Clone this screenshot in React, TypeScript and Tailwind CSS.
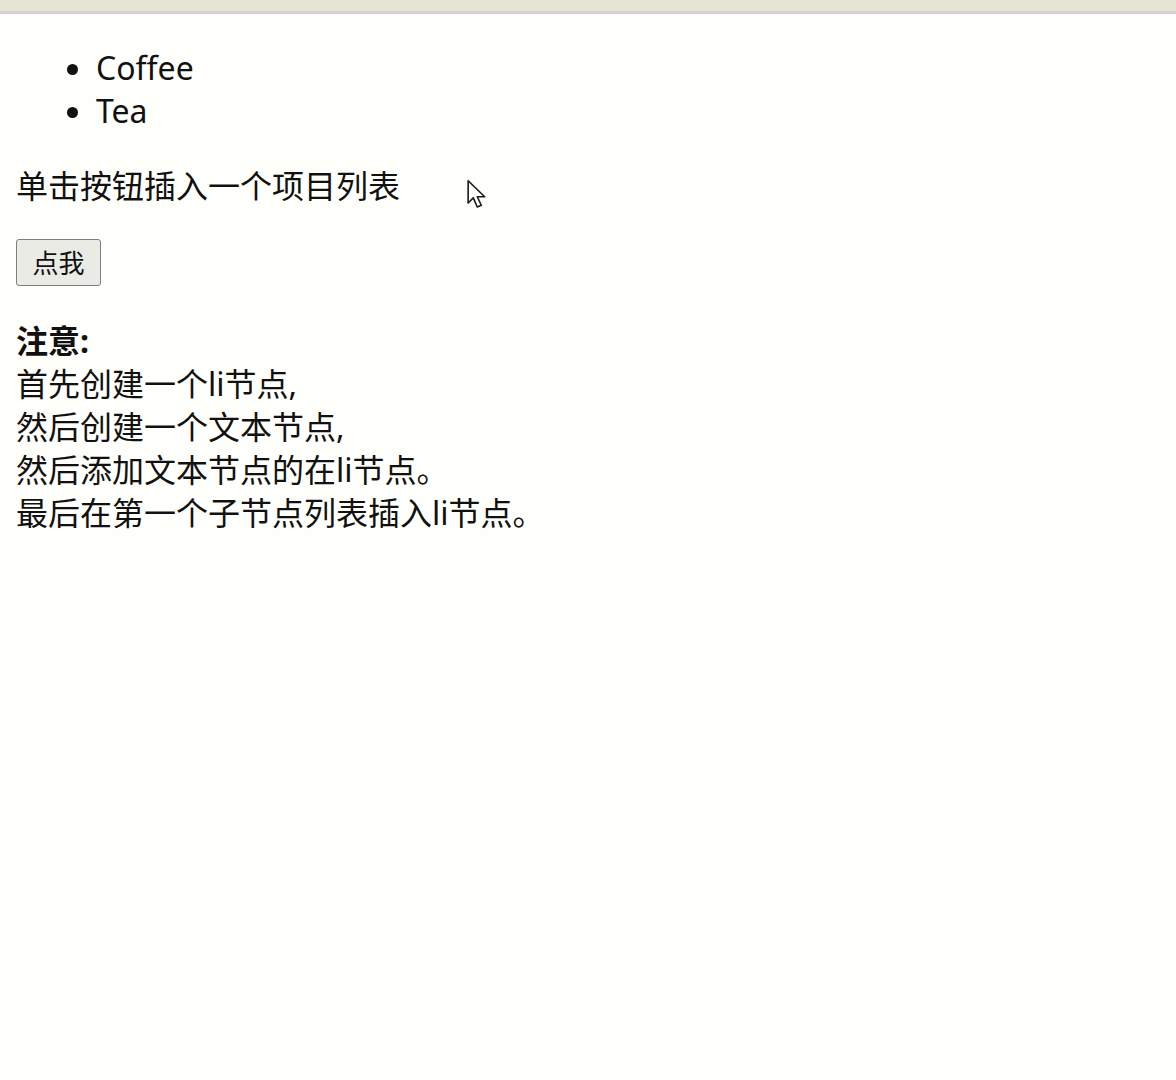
import React from 'react';

const font = { fontFamily: '"Noto Sans", "Noto Sans CJK SC", sans-serif' };

const Cursor: React.FC = () => (
  <svg
    className="absolute left-[466px] top-[179px]"
    width="26"
    height="32"
    viewBox="0 0 22 28"
    fill="none"
  >
    <path
      d="M1.5 1.5 L1.5 21 L6 16.5 L9.5 24.5 L13 23 L9.5 15.5 L16 15.5 Z"
      fill="#ffffff"
      stroke="#1a1a1a"
      strokeWidth="1.4"
      strokeLinejoin="round"
    />
  </svg>
);

const App: React.FC = () => {
  const notes = [
    '首先创建一个li节点,',
    '然后创建一个文本节点,',
    '然后添加文本节点的在li节点。',
    '最后在第一个子节点列表插入li节点。',
  ];

  return (
    <div className="relative min-h-[1080px] w-[1176px] bg-[#fefefa] text-[#111111]" style={font}>
      <div className="h-[11px] bg-[#e6e5d4]"></div>
      <div className="h-[3px] bg-[#d2d2d8]"></div>

      <div className="px-4 text-[32px] leading-[43px]">
        <ul className="mt-8 list-disc pl-20">
          <li>Coffee</li>
          <li>Tea</li>
        </ul>

        <p className="mt-8">单击按钮插入一个项目列表</p>

        <p className="mt-8 h-[48px]">
          <button className="flex h-[47px] w-[85px] items-center justify-center rounded-[3px] border border-[#7e7e7e] bg-[#ebebe6] text-[26px] leading-none text-[#111111]">
            点我
          </button>
        </p>

        <div className="mt-8">
          <b className="font-bold">注意:</b>
          {notes.map((line) => (
            <div key={line}>{line}</div>
          ))}
        </div>
      </div>

      <Cursor />
    </div>
  );
};

export default App;
